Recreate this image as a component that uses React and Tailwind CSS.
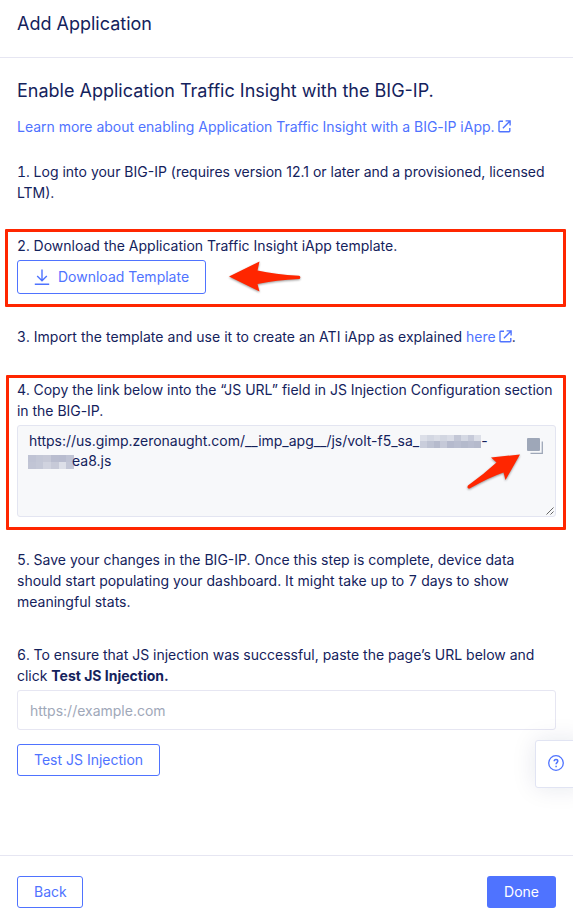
const ExternalLink = ({ className = '' }) => (
  <svg className={'inline-block h-[13px] w-[13px] ' + className} viewBox="0 0 13 13" fill="none" stroke="currentColor" strokeWidth="1.4">
    <path d="M5 1.2H1.7a.7.7 0 0 0-.7.7v9.2c0 .4.3.7.7.7h9.4c.4 0 .7-.3.7-.7V8" />
    <path d="M7.6.9h4.5v4.6M11.8 1.2 4.9 8.3" />
  </svg>
);

const urlMosaic = ['#dcdfe8', '#d3d7e2', '#dadde6', '#d2d6e1', '#d9dce6', '#c3c7d6', '#d4d8e3', '#c6cad9', '#dcdfe8',
  '#c9cddb', '#bec3d3', '#b6bbcd', '#c5c9d8', '#b5bacd', '#b9bed0', '#b4bacc', '#b8bdcf', '#b5bacc'];
const suffixMosaic = ['#bfc3d4', '#c3c7d6', '#c6c9d7', '#b9bdcf', '#b8bccf', '#bfc3d4',
  '#c1c5d5', '#c4c8d7', '#d0d3df', '#c7cad8', '#dcdfe8', '#c3c7d7'];

const Mosaic = ({ cells, className }) => (
  <span className={'grid ' + className}>
    {cells.map((c, i) => <span key={i} style={{ backgroundColor: c }} />)}
  </span>
);

const outline = 'flex items-center rounded-[3px] border border-[#4f73ff] bg-white px-4 pb-[2px] text-[#4f73ff]';

const Num = ({ n }) => <span className="tabular-nums">{n}.&nbsp;</span>;

export default function App() {
  return (
    <div className="relative flex h-[924px] w-[573px] flex-col overflow-hidden bg-white font-['Inter',sans-serif] text-[14px] leading-[21px] text-[#14225c]">
      <header className="h-[58px] shrink-0 border-b border-[#e6e6f2] pl-[17px] pt-3">
        <h1 className="text-[18px] leading-6">Add Application</h1>
      </header>

      <main className="flex flex-1 flex-col items-start whitespace-nowrap px-[17px] pt-[21px]">
        <h2 className="text-[18px] leading-6">Enable Application Traffic Insight with the BIG-IP.</h2>
        <a className="mt-[13px] flex items-center tracking-[-0.015px] text-[#4f73ff]">
          Learn more about enabling Application Traffic Insight with a BIG-IP iApp.
          <ExternalLink className="ml-[3px]" />
        </a>
        <p className="mt-6"><Num n="1" />Log into your BIG-IP (requires version 12.1 or later and a provisioned, licensed<br />LTM).</p>

        <section className="relative mt-8 w-full">
          <p><Num n="2" />Download the Application Traffic Insight iApp template.</p>
          <button className={outline + ' mt-1 h-[34px] w-[189px]'}>
            <svg className="mr-2 mt-px h-4 w-4 shrink-0" viewBox="0 0 16 16" fill="none" stroke="currentColor" strokeWidth="1.4">
              <path d="M8 .5v11.2M3.2 7 8 11.8 12.8 7M.8 15.3h14.4" />
            </svg>
            Download Template
          </button>
          <div className="absolute -left-3 -top-[6px] h-[78px] w-[561px] rounded-[1px] border-[3px] border-[#ff2600]" />
          <svg className="absolute left-[208px] top-[21px] h-[42px] w-[80px] drop-shadow-[0_1px_1px_rgba(0,0,0,0.4)]" viewBox="225 256 80 42">
            <path fill="#ff2600" d="M229 276.500 259.500 261.500 257.500 270.500Q275 274.500 299 275.800Q300.500 276 300.300 277.500Q300.200 279 299 279Q276 280 257.500 284L259.500 291.500Z" />
          </svg>
        </section>

        <p className="mt-8 flex items-center tracking-[0.03px]">
          <Num n="3" />Import the template and use it to create an ATI iApp as explained&nbsp;
          <a className="flex items-center text-[#4f73ff]">here<ExternalLink className="ml-[3px]" /></a>.
        </p>

        <section className="relative mt-8 w-full">
          <p className="tracking-[-0.025px]"><Num n="4" />Copy the link below into the “JS URL” field in JS Injection Configuration section<br />in the BIG-IP.</p>
          <div className="relative mt-1 h-[92px] w-full rounded-[3px] border border-[#e3e5f1] bg-[#f7f8fa] pl-[11px] pt-[5px] leading-[20px]">
            <div className="flex items-center tracking-[-0.015px]">
              https://us.gimp.zeronaught.com/__imp_apg__/js/volt-f5_sa_
              <Mosaic cells={urlMosaic} className="ml-px h-[13px] w-[61px] grid-cols-9" />-
            </div>
            <div className="flex items-center">
              <Mosaic cells={suffixMosaic} className="-ml-px mt-px h-[14px] w-[46px] grid-cols-6" />
              <span className="-ml-[2px]">ea8.js</span>
            </div>
            <svg className="absolute right-3 top-3 h-4 w-4" viewBox="0 0 16 16">
              <rect width="13" height="13" rx="1" fill="#9ea7b8" />
              <path d="M15.300 3.500V15.300H3.500" fill="none" stroke="#9ea7b8" strokeWidth="1.300" />
            </svg>
            <svg className="absolute bottom-[1px] right-[1px] h-2 w-2" viewBox="0 0 8 8" stroke="#555" strokeWidth="0.900">
              <path d="M.5 7.500 7.500.5M4.500 7.500 7.500 4.500" />
            </svg>
          </div>
          <div className="absolute -left-[11px] -top-[4px] h-[155px] w-[560px] rounded-[1px] border-[3px] border-[#ff2600]" />
          <svg className="absolute left-[448px] top-[73px] h-[42px] w-[60px] drop-shadow-[0_1px_1px_rgba(0,0,0,0.4)]" viewBox="465 452 60 42">
            <path fill="#ff2600" d="M520 454.500 491 457.500 496.500 462.500Q484 474 468 485.500Q467 487 468 488.200Q469 489 470.500 488Q489 477.500 503.500 472.500L505.500 480Z" />
          </svg>
        </section>

        <p className="mt-8"><Num n="5" />Save your changes in the BIG-IP. Once this step is complete, device data<br />should start populating your dashboard. It might take up to <span className="tabular-nums">7</span> days to show<br />meaningful stats.</p>
        <p className="mt-8 tracking-[-0.01px]"><Num n="6" />To ensure that JS injection was successful, paste the page’s URL below and<br />click <b className="font-bold">Test JS Injection.</b></p>
        <div className="mt-1 flex h-10 w-full items-center rounded-[3px] border border-[#e6e6f2] px-3 text-[#a0a8b9]">https://example.com</div>
        <button className={outline + ' mt-[14px] h-8 w-[143px]'}>Test JS Injection</button>
      </main>

      <aside className="absolute left-[535px] top-[740px] flex h-12 w-[50px] items-center rounded-[3px] border border-[#e1e4f3] bg-white pl-3 shadow-[0_0_24px_rgba(15,30,87,0.10)]">
        <svg className="-mt-[2px] h-4 w-4 text-[#4f73ff]" viewBox="0 0 16 16" fill="none" stroke="currentColor" strokeWidth="1.300">
          <circle cx="8" cy="8" r="7.300" />
          <path strokeWidth="1.500" d="M6.200 6.300c0-1.200.7-1.900 1.800-1.900s1.800.7 1.800 1.700c0 1.500-1.700 1.600-1.700 3.200M8.100 10.800v1.500" />
        </svg>
      </aside>

      <footer className="flex h-[69px] shrink-0 items-start justify-between border-t border-[#e6e6f2] px-[17px] pt-5">
        <button className={outline + ' h-8 w-[66px]'}>Back</button>
        <button className="flex h-8 w-[69px] items-center justify-center rounded-[3px] bg-[#4f73ff] pb-[2px] text-white">Done</button>
      </footer>
    </div>
  );
}
